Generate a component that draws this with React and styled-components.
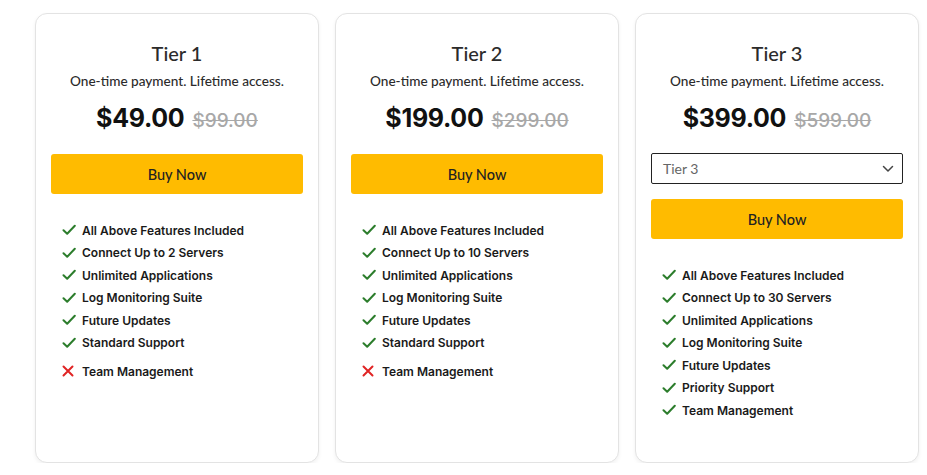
import React from "react";
import styled, { createGlobalStyle } from "styled-components";

const Global = createGlobalStyle`
  html, body { margin: 0; padding: 0; background: #ffffff; }
  body { font-family: Lato, "Noto Sans", sans-serif; }
  * { box-sizing: border-box; }
`;

const Grid = styled.div`
  display: grid;
  grid-template-columns: repeat(3, 284px);
  gap: 16px;
  padding: 13px 0 0 35px;
`;

const Card = styled.div`
  height: 450px;
  background: #fff;
  border: 1px solid #e3e3e3;
  border-radius: 12px;
  box-shadow: 0 2px 4px rgba(0, 0, 0, 0.06);
  padding: 27px 15px 0 15px;
  display: flex;
  flex-direction: column;
  align-items: stretch;
`;

const Title = styled.h2`
  margin: 0;
  font-family: Lato, sans-serif;
  font-weight: 500;
  font-size: 20px;
  line-height: 24px;
  color: #2b2b2b;
  text-align: center;
`;

const Sub = styled.p`
  margin: 6px 0 0;
  font-family: Lato, sans-serif;
  font-weight: 500;
  font-size: 13.6px;
  line-height: 20px;
  color: #2b2b2b;
  text-align: center;
`;

const PriceRow = styled.div`
  display: flex;
  justify-content: center;
  align-items: baseline;
  gap: 8px;
  margin-top: 12px;
  height: 35px;
`;

const Price = styled.span`
  font-family: Inter, sans-serif;
  font-weight: 700;
  font-size: 25px;
  letter-spacing: -0.3px;
  color: #111;
`;

const Old = styled.span`
  font-family: Inter, sans-serif;
  font-weight: 500;
  font-size: 19px;
  color: #a8a8a8;
  text-decoration: line-through;
`;

const SelectBox = styled.div`
  margin-top: 15px;
  height: 31px;
  border: 1px solid #222;
  border-radius: 2px;
  display: flex;
  align-items: center;
  justify-content: space-between;
  padding: 0 8px 0 11px;
  font-family: Lato, sans-serif;
  font-size: 14px;
  color: #666;
`;

const BuyButton = styled.button`
  margin-top: ${(p) => p.$mt}px;
  height: 40px;
  width: 100%;
  border: none;
  border-radius: 3px;
  background: #ffbb00;
  font-family: Lato, sans-serif;
  font-size: 14.5px;
  font-weight: 500;
  color: #222;
  cursor: pointer;
`;

const List = styled.ul`
  list-style: none;
  margin: ${(p) => p.$mt}px 0 0;
  padding: 0 0 0 11px;
  display: flex;
  flex-direction: column;
`;

const Item = styled.li`
  display: flex;
  align-items: center;
  gap: ${(p) => (p.$no ? 8 : 6)}px;
  height: ${(p) => (p.$no ? 28 : 22.5)}px;
  padding-top: ${(p) => (p.$no ? 6 : 0)}px;
  font-family: Inter, sans-serif;
  font-weight: 600;
  font-size: 12px;
  color: #1a1a1a;
`;

const Check = () => (
  <svg width="14" height="12" viewBox="0 0 14 12">
    <path d="M1.5 6.2 L5.2 9.8 L12.8 1.8" fill="none" stroke="#2c7d2c" strokeWidth="2" strokeLinecap="round" strokeLinejoin="round" />
  </svg>
);

const Cross = () => (
  <svg width="12" height="12" viewBox="0 0 12 12">
    <path d="M1.5 1.5 L10.5 10.5 M10.5 1.5 L1.5 10.5" fill="none" stroke="#e02424" strokeWidth="2" strokeLinecap="round" />
  </svg>
);

const Chevron = () => (
  <svg width="12" height="8" viewBox="0 0 12 8">
    <path d="M1.5 1.5 L6 6 L10.5 1.5" fill="none" stroke="#444" strokeWidth="1.5" strokeLinecap="round" strokeLinejoin="round" />
  </svg>
);

const tiers = [
  {
    name: "Tier 1",
    price: "$49.00",
    old: "$99.00",
    features: [
      ["All Above Features Included", true],
      ["Connect Up to 2 Servers", true],
      ["Unlimited Applications", true],
      ["Log Monitoring Suite", true],
      ["Future Updates", true],
      ["Standard Support", true],
      ["Team Management", false],
    ],
  },
  {
    name: "Tier 2",
    price: "$199.00",
    old: "$299.00",
    features: [
      ["All Above Features Included", true],
      ["Connect Up to 10 Servers", true],
      ["Unlimited Applications", true],
      ["Log Monitoring Suite", true],
      ["Future Updates", true],
      ["Standard Support", true],
      ["Team Management", false],
    ],
  },
  {
    name: "Tier 3",
    price: "$399.00",
    old: "$599.00",
    select: true,
    features: [
      ["All Above Features Included", true],
      ["Connect Up to 30 Servers", true],
      ["Unlimited Applications", true],
      ["Log Monitoring Suite", true],
      ["Future Updates", true],
      ["Priority Support", true],
      ["Team Management", true],
    ],
  },
];

export default function App() {
  return (
    <>
      <Global />
      <Grid>
        {tiers.map((t) => (
          <Card key={t.name}>
            <Title>{t.name}</Title>
            <Sub>One-time payment. Lifetime access.</Sub>
            <PriceRow>
              <Price>{t.price}</Price>
              <Old>{t.old}</Old>
            </PriceRow>
            {t.select && (
              <SelectBox>
                <span>Tier 3</span>
                <Chevron />
              </SelectBox>
            )}
            <BuyButton $mt={t.select ? 15 : 16}>Buy Now</BuyButton>
            <List $mt={25}>
              {t.features.map(([f, ok]) => (
                <Item key={f} $no={!ok}>
                  {ok ? <Check /> : <Cross />}
                  <span>{f}</span>
                </Item>
              ))}
            </List>
          </Card>
        ))}
      </Grid>
    </>
  );
}
